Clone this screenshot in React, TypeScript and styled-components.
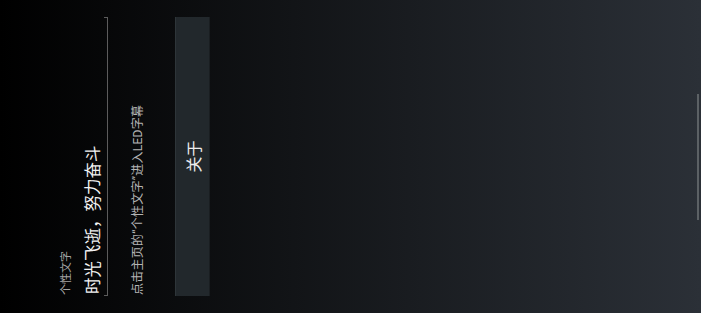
import React from 'react';
import styled, { createGlobalStyle } from 'styled-components';

const GlobalStyle = createGlobalStyle`
  html, body {
    margin: 0;
    padding: 0;
    background: #000;
  }
`;

const Viewport = styled.div`
  width: 701px;
  height: 313px;
  overflow: hidden;
`;

// the device screen is shown turned a quarter to the left
const Screen = styled.div`
  width: 313px;
  height: 701px;
  box-sizing: border-box;
  padding: 60px 17px 0 17px;
  transform-origin: 0 0;
  transform: translateY(313px) rotate(-90deg);
  background: linear-gradient(to bottom, #000000 0%, #2b3037 100%);
  font-family: Roboto, 'Noto Sans CJK SC', sans-serif;
  position: relative;
  display: flex;
  flex-direction: column;
`;

const Label = styled.div`
  font-size: 11px;
  line-height: 14px;
  color: #a4a4a4;
  padding-left: 1px;
`;

const EditText = styled.div`
  position: relative;
  margin-top: 10px;
  padding: 0 0 3px 2px;
  border-bottom: 1px solid #5c5c5c;
  font-size: 16.5px;
  line-height: 20px;
  color: #f2f2f2;

  &::before,
  &::after {
    content: '';
    position: absolute;
    bottom: -1px;
    width: 1px;
    height: 4px;
    background: #5c5c5c;
  }
  &::before {
    left: 0;
  }
  &::after {
    right: 0;
  }
`;

const Hint = styled.div`
  margin-top: 22px;
  padding-left: 1px;
  font-size: 12px;
  line-height: 16px;
  letter-spacing: 0.25px;
  color: #b4b4b4;
`;

const Button = styled.button`
  margin-top: 29px;
  height: 35px;
  width: 100%;
  border: none;
  border-top: 1px solid #2e3539;
  border-bottom: 1px solid #1a1e21;
  background: #22282c;
  color: #ececec;
  font-family: inherit;
  font-size: 16px;
  padding: 0;
`;

const ScrollThumb = styled.div`
  position: absolute;
  left: 93px;
  bottom: 2px;
  width: 126px;
  height: 2px;
  background: #5c6165;
`;

export default function App() {
  return (
    <Viewport>
      <GlobalStyle />
      <Screen>
        <Label>个性文字</Label>
        <EditText>时光飞逝，努力奋斗</EditText>
        <Hint>点击主页的“个性文字”进入LED字幕</Hint>
        <Button>关于</Button>
        <ScrollThumb />
      </Screen>
    </Viewport>
  );
}
